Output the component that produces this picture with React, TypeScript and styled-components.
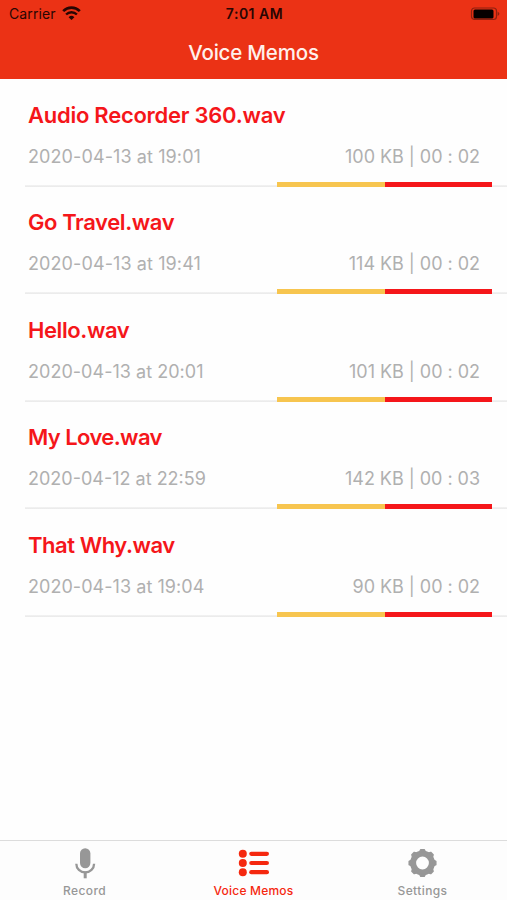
import React from 'react';
import styled, { createGlobalStyle } from 'styled-components';

const GlobalStyle = createGlobalStyle`
  * { box-sizing: border-box; }
  body { margin: 0; background: #fff; font-family: Inter, "Liberation Sans", sans-serif; }
`;

const Screen = styled.div`
  display: flex;
  flex-direction: column;
  width: 507px;
  height: 900px;
  overflow: hidden;
  background: #fefefe;
`;

const Header = styled.header`
  height: 79px;
  flex: none;
  background: #eb3215;
`;

const StatusBar = styled.div`
  display: grid;
  grid-template-columns: 1fr auto 1fr;
  align-items: center;
  height: 27px;
  padding: 0 7px 0 9px;
  color: #280603;
  font-size: 14px;
  line-height: 27px;
`;

const Carrier = styled.div`
  display: flex;
  align-items: center;
  gap: 6px;
  height: 26px;
  letter-spacing: 0.1px;
`;

const Clock = styled.div`
  font-weight: 600;
  font-size: 14px;
  letter-spacing: 0.5px;
`;

const Battery = styled.svg`
  justify-self: end;
  display: block;
`;

const Title = styled.h1`
  margin: 0;
  height: 52px;
  line-height: 51px;
  text-align: center;
  color: #fff0ec;
  font-size: 20.5px;
  font-weight: 500;
  letter-spacing: -0.2px;
`;

const List = styled.ul`
  list-style: none;
  margin: 0;
  padding: 0;
  flex: 1;
`;

const Row = styled.li`
  display: flex;
  flex-direction: column;
  height: 107.5px;
  padding: 20.8px 0 0 28px;
`;

const Name = styled.div<{ $spacing: number }>`
  height: 30px;
  line-height: 30px;
  color: #f5161a;
  font-size: 22px;
  font-weight: 600;
  letter-spacing: ${(p) => p.$spacing}px;
  white-space: nowrap;
`;

const Details = styled.div`
  display: flex;
  justify-content: space-between;
  margin-top: 14.2px;
  padding-right: 27px;
  height: 26px;
  line-height: 26px;
  color: #b0b0b0;
  font-size: 18px;
  white-space: nowrap;
`;

const Stamp = styled.span<{ $spacing: number }>`
  letter-spacing: ${(p) => p.$spacing}px;
`;

const Info = styled.span`
  letter-spacing: -0.03px;
`;

const Footer = styled.div`
  display: flex;
  justify-content: flex-end;
  margin: 12px 0 0 -3px;
  height: 5px;
  padding-right: 15px;
  background: linear-gradient(#f3f3f3, #e9e9e9) 0 3px / 100% 2px no-repeat;
`;

const Segment = styled.div<{ $color: string }>`
  width: 107.5px;
  height: 5px;
  background: ${(p) => p.$color};
`;

const TabBar = styled.nav`
  display: grid;
  grid-template-columns: repeat(3, 1fr);
  height: 60px;
  flex: none;
  border-top: 1px solid #dcdcdc;
  background: #fdfdfd;
`;

const Tab = styled.div<{ $active?: boolean }>`
  display: flex;
  flex-direction: column;
  align-items: center;
  padding-top: 6px;
  color: ${(p) => (p.$active ? '#f5280f' : '#979797')};
  font-size: 12px;
  font-weight: 500;
  line-height: 16px;
  svg { display: block; margin-bottom: 4px; }
`;

const Label = styled.span<{ $spacing: number }>`
  letter-spacing: ${(p) => p.$spacing}px;
`;

const WifiIcon = () => (
  <svg width="19" height="15" viewBox="0 0 19 15" fill="none" stroke="currentColor">
    <path d="M1.2 5.1a11.8 11.8 0 0 1 16.6 0" strokeWidth="2.7" />
    <path d="M4.1 8.5a7.6 7.6 0 0 1 10.8 0" strokeWidth="2.4" />
    <path d="M6.6 11.2a4.1 4.1 0 0 1 5.8 0L9.5 14z" fill="currentColor" stroke="none" />
  </svg>
);

const BatteryIcon = () => (
  <Battery width="30" height="14" viewBox="0 0 30 14">
    <rect x="1.5" y="1" width="25" height="11.5" rx="3" fill="none" stroke="#8d2010" strokeWidth="1.2" />
    <rect x="3.5" y="2.5" width="20" height="9" rx="1.5" fill="#050000" />
    <path d="M27.6 4.4q3.6 2.3 0 4.6z" fill="#8d2010" />
  </Battery>
);

const MicIcon = () => (
  <svg width="24" height="32" viewBox="0 0 24 32" fill="none" stroke="currentColor">
    <rect x="7" y="1.2" width="10.4" height="20" rx="5.2" fill="currentColor" stroke="none" />
    <path d="M3.3 16.8a8.9 8.6 0 0 0 17.8 0" strokeWidth="2.3" />
    <path d="M12.2 24.5v6.8" strokeWidth="3" />
  </svg>
);

const ListIcon = () => (
  <svg width="32" height="32" viewBox="0 0 32 32" fill="currentColor">
    {[6.8, 16, 25.2].map((y) => (
      <g key={y}>
        <circle cx="4.8" cy={y} r="4" />
        <rect x="11.2" y={y - 2.1} width="19.8" height="4.2" rx="2.1" />
      </g>
    ))}
  </svg>
);

const GearIcon = () => (
  <svg width="32" height="32" viewBox="0 0 32 32" fill="none" stroke="currentColor">
    <circle cx="15.5" cy="16" r="9.4" strokeWidth="6" />
    {[0, 45, 90, 135, 180, 225, 270, 315].map((a) => (
      <path
        key={a}
        d="M12.6 5L13.8 2.7h3.4L18.4 5z"
        transform={`rotate(${a} 15.5 16)`}
        fill="currentColor"
        strokeWidth="1.5"
        strokeLinejoin="round"
      />
    ))}
  </svg>
);

const memos = [
  { name: 'Audio Recorder 360.wav', date: '2020-04-13 at 19:01', info: '100 KB | 00 : 02', spacing: -0.26, dateSpacing: 0.1 },
  { name: 'Go Travel.wav', date: '2020-04-13 at 19:41', info: '114 KB | 00 : 02', spacing: -0.4, dateSpacing: 0.1 },
  { name: 'Hello.wav', date: '2020-04-13 at 20:01', info: '101 KB | 00 : 02', spacing: -0.4, dateSpacing: 0.03 },
  { name: 'My Love.wav', date: '2020-04-12 at 22:59', info: '142 KB | 00 : 03', spacing: -0.6, dateSpacing: 0 },
  { name: 'That Why.wav', date: '2020-04-13 at 19:04', info: '90 KB | 00 : 02', spacing: -0.45, dateSpacing: 0.05 },
];

export default function App() {
  return (
    <Screen>
      <GlobalStyle />
      <Header>
        <StatusBar>
          <Carrier>Carrier <WifiIcon /></Carrier>
          <Clock>7:01 AM</Clock>
          <BatteryIcon />
        </StatusBar>
        <Title>Voice Memos</Title>
      </Header>
      <List>
        {memos.map((m) => (
          <Row key={m.name}>
            <Name $spacing={m.spacing}>{m.name}</Name>
            <Details>
              <Stamp $spacing={m.dateSpacing}>{m.date}</Stamp>
              <Info>{m.info}</Info>
            </Details>
            <Footer>
              <Segment $color="#f7c54f" />
              <Segment $color="#f5161a" />
            </Footer>
          </Row>
        ))}
      </List>
      <TabBar>
        <Tab><MicIcon /><Label $spacing={0.4}>Record</Label></Tab>
        <Tab $active><ListIcon /><Label $spacing={0.2}>Voice Memos</Label></Tab>
        <Tab><GearIcon /><Label $spacing={0.4}>Settings</Label></Tab>
      </TabBar>
    </Screen>
  );
}
